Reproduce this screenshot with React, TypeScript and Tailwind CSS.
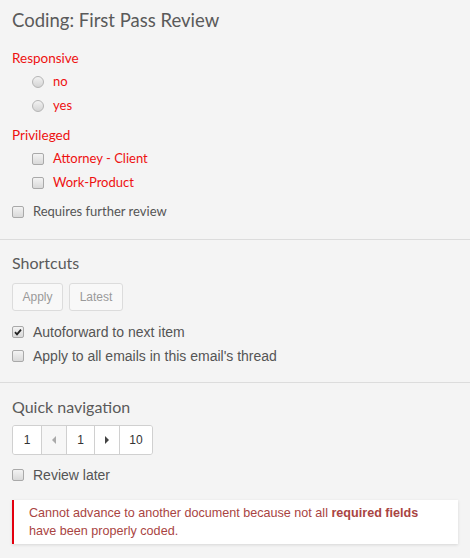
const HEAD = "font-['Lato','Open_Sans',sans-serif]";
const BODY = "font-['Liberation_Sans',Arial,sans-serif]";

function Radio() {
  return (
    <span className="inline-block h-[12px] w-[12px] shrink-0 rounded-full border border-[#b5b5b5] bg-gradient-to-b from-[#f2f2f2] to-[#d4d4d4]" />
  );
}

function Checkbox({ checked = false }: { checked?: boolean }) {
  return (
    <span className="relative inline-block h-[12px] w-[12px] shrink-0 rounded-[2px] border border-[#a9a9a9] bg-gradient-to-b from-[#f3f3f3] to-[#d9d9d9]">
      {checked && (
        <svg viewBox="0 0 12 12" className="absolute -left-px -top-px h-[12px] w-[12px]">
          <path d="M3 6.2 L5 8.3 L9 3.6" fill="none" stroke="#222" strokeWidth="1.8" />
        </svg>
      )}
    </span>
  );
}

function GroupOption({ kind, label }: { kind: "radio" | "check"; label: string }) {
  return (
    <div className="flex h-[24px] items-center gap-[9px] pl-[20px]">
      {kind === "radio" ? <Radio /> : <Checkbox />}
      <span className={`${HEAD} text-[13px] text-[#ee1111]`}>{label}</span>
    </div>
  );
}

function CheckRow({ label, checked, font = BODY, size = "text-[14px]" }: { label: string; checked?: boolean; font?: string; size?: string }) {
  return (
    <div className="flex h-[24px] items-center gap-[9px]">
      <Checkbox checked={checked} />
      <span className={`${font} ${size} text-[#555]`}>{label}</span>
    </div>
  );
}

function PageCell({ children, muted = false, w }: { children: React.ReactNode; muted?: boolean; w: string }) {
  return (
    <div
      className={`flex h-full ${w} items-center justify-center border-l border-[#d0d0d0] first:border-l-0 ${
        muted ? "bg-[#f7f7f7]" : "bg-white"
      }`}
    >
      {children}
    </div>
  );
}

export default function App() {
  return (
    <div className="min-h-[558px] w-[470px] bg-[#f4f4f4]">
      <section className="px-[12px] pb-[15px] pt-[8px]">
        <h1 className={`${HEAD} h-[24px] text-[18.5px] leading-[24px] text-[#5a5a5a]`}>Coding: First Pass Review</h1>
        <div className={`${HEAD} mt-[14px] flex h-[24px] items-center text-[13.5px] text-[#ee1111]`}>Responsive</div>
        <GroupOption kind="radio" label="no" />
        <GroupOption kind="radio" label="yes" />
        <div className={`${HEAD} mt-[5px] flex h-[24px] items-center text-[13.5px] text-[#ee1111]`}>Privileged</div>
        <GroupOption kind="check" label="Attorney - Client" />
        <GroupOption kind="check" label="Work-Product" />
        <div className="mt-[5px]">
          <CheckRow label="Requires further review" font={HEAD} size="text-[13px]" />
        </div>
      </section>

      <section className="border-t border-[#dcdcdc] px-[12px] pb-[14px] pt-[11px]">
        <h2 className={`${HEAD} flex h-[24px] items-center text-[16px] text-[#5a5a5a]`}>Shortcuts</h2>
        <div className={`${BODY} mt-[8px] flex gap-[6px] text-[12px] text-[#9a9a9a]`}>
          <button className="h-[28px] w-[51px] rounded-[3px] border border-[#dcdcdc] bg-[#f8f8f8]">Apply</button>
          <button className="h-[28px] w-[54px] rounded-[3px] border border-[#dcdcdc] bg-[#f8f8f8]">Latest</button>
        </div>
        <div className="mt-[9px]">
          <CheckRow label="Autoforward to next item" checked />
          <CheckRow label="Apply to all emails in this email's thread" />
        </div>
      </section>

      <section className="border-t border-[#dcdcdc] px-[12px] pb-[13px] pt-[12px]">
        <h2 className={`${HEAD} flex h-[24px] items-center text-[16px] text-[#5a5a5a]`}>Quick navigation</h2>
        <div className={`${BODY} mt-[6px] flex h-[30px] w-[141px] overflow-hidden rounded-[3px] border border-[#d0d0d0] text-[12px] text-[#333]`}>
          <PageCell w="w-[28px]">1</PageCell>
          <PageCell w="w-[25px]" muted>
            <svg viewBox="0 0 6 8" className="h-[8px] w-[6px]">
              <path d="M5 0 L1 4 L5 8 Z" fill="#aaa" />
            </svg>
          </PageCell>
          <PageCell w="w-[28px]">1</PageCell>
          <PageCell w="w-[25px]">
            <svg viewBox="0 0 6 8" className="h-[8px] w-[6px]">
              <path d="M1 0 L5 4 L1 8 Z" fill="#444" />
            </svg>
          </PageCell>
          <PageCell w="flex-1">10</PageCell>
        </div>
        <div className="mt-[8px]">
          <CheckRow label="Review later" />
        </div>
        <div
          className={`${BODY} mt-[13px] border-l-2 border-[#e3000f] bg-white pb-[4px] pl-[15px] pr-[12px] pt-[4px] text-[12.6px] leading-[18px] text-[#a94442] shadow-[0_1px_3px_rgba(0,0,0,0.12)]`}
        >
          Cannot advance to another document because not all <b className="font-semibold">required fields</b> have been
          properly coded.
        </div>
      </section>
    </div>
  );
}
